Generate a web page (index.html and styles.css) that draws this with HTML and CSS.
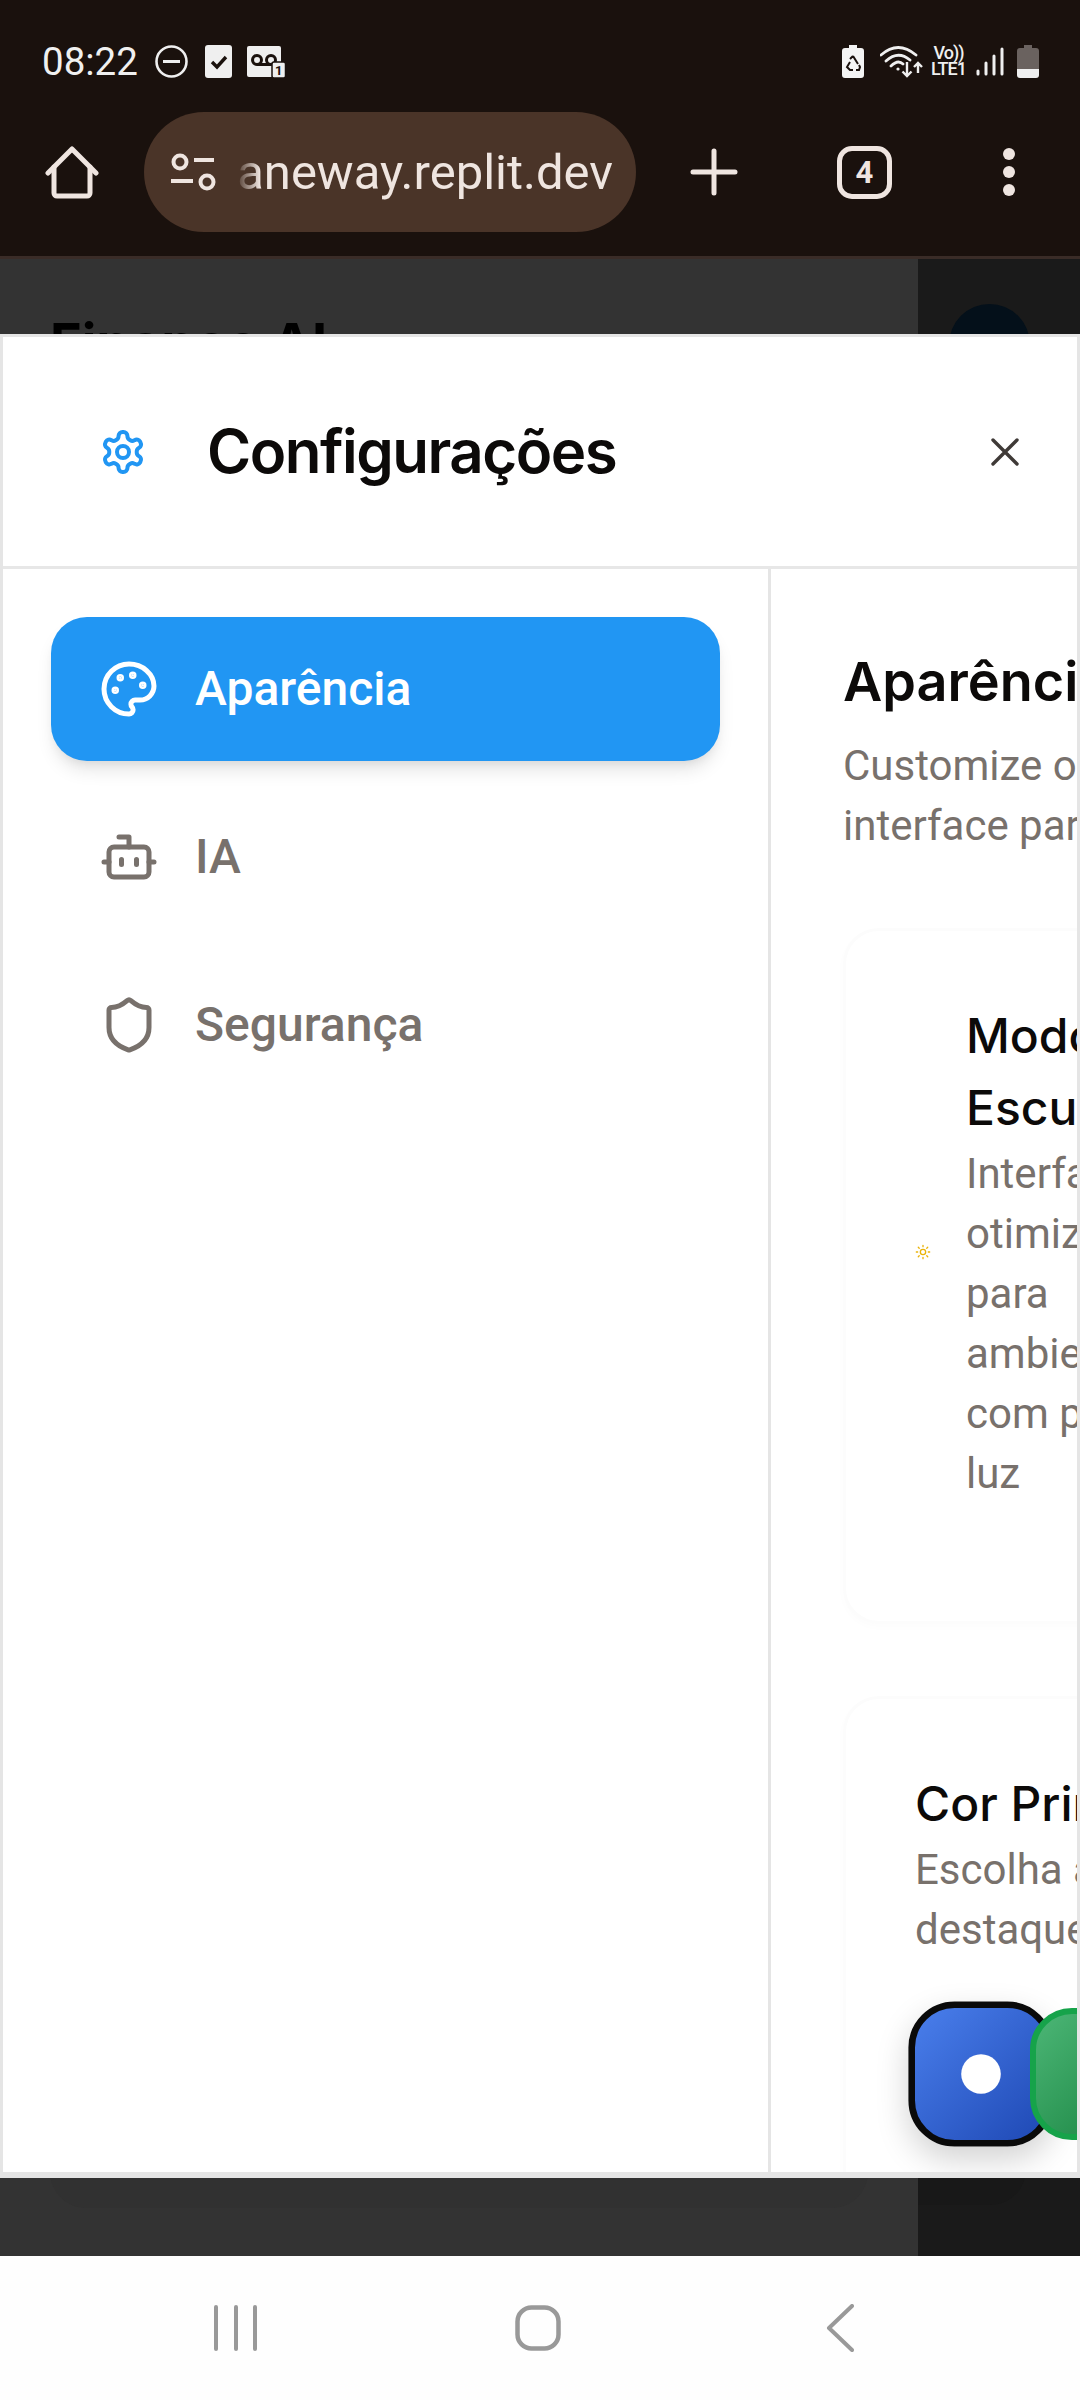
FILE: index.html
```html
<!DOCTYPE html>
<html lang="pt-BR">
<head>
    <meta charset="UTF-8">
    <meta name="viewport" content="width=device-width, initial-scale=1.0">
    <title>Configurações</title>
    <link rel="stylesheet" href="styles.css">
</head>
<body>
    <!-- Browser chrome -->
    <header class="chrome">
        <div class="status-bar">
            <span class="clock">08:22</span>
            <svg class="ic-dnd" width="33" height="33" viewBox="0 0 33 33"><circle cx="16.5" cy="16.5" r="15" fill="none" stroke="#efefef" stroke-width="2.6"/><path d="M8 16.5h17" stroke="#efefef" stroke-width="3"/></svg>
            <svg class="ic-check" width="27" height="33" viewBox="0 0 27 33"><rect width="27" height="33" rx="3" fill="#efefef"/><path d="M7 17l5 5 9-10" fill="none" stroke="#1a110d" stroke-width="3.4"/></svg>
            <svg class="ic-voicemail" width="40" height="33" viewBox="0 0 40 33"><path d="M3 1h30a2 2 0 0 1 2 2v29H3a2 2 0 0 1-2-2V3a2 2 0 0 1 2-2z" fill="#efefef"/><circle cx="11" cy="15" r="4.5" fill="none" stroke="#1a110d" stroke-width="3"/><circle cx="25" cy="15" r="4.5" fill="none" stroke="#1a110d" stroke-width="3"/><path d="M11 19.5h14" stroke="#1a110d" stroke-width="3"/><rect x="26" y="17" width="13.5" height="16" rx="2" fill="#efefef" stroke="#1a110d" stroke-width="1.5"/><text x="32.7" y="30" class="badge-num" text-anchor="middle">1</text></svg>
            <span class="status-right">
                <svg class="ic-recycle" width="22" height="33" viewBox="0 0 22 33"><path d="M7 0h8v3h4a3 3 0 0 1 3 3v24a3 3 0 0 1-3 3H3a3 3 0 0 1-3-3V6a3 3 0 0 1 3-3h4z" fill="#f4f4f4"/><path d="M11 11l5 8M8 17l-3 5 3 3h3M14 25h3l1-3-1-2M8 14l3-3" fill="none" stroke="#1a110d" stroke-width="2"/></svg>
                <svg class="ic-wifi" width="43" height="34" viewBox="0 0 43 34" fill="none" stroke="#efefef" stroke-width="2.8" stroke-linecap="round"><path d="M1 11Q18-4 36 11M6 17Q18 6 30 16M11 22Q18 15 23 20"/><circle cx="18" cy="25" r="1.6" fill="#efefef" stroke="none"/><path d="M27 18v14M22.500 27.500l4.500 4.500 4.500-4.500M38 19v10M34 23l4-4 4 4" stroke-width="2.4" stroke-linecap="butt"/></svg>
                <span class="volte"><span>Vo))</span><span>LTE1</span></span>
                <svg class="ic-signal" width="28" height="29" viewBox="0 0 28 29" stroke="#efefef" stroke-width="3" stroke-linecap="round"><path d="M2 27v-3M10 27v-11M18 27V9M26 27V2"/></svg>
                <svg class="ic-battery" width="22" height="33" viewBox="0 0 22 33"><path d="M7 0h8v3h4a3 3 0 0 1 3 3v18H0V6a3 3 0 0 1 3-3h4z" fill="#6a625f"/><path d="M0 24h22v6a3 3 0 0 1-3 3H3a3 3 0 0 1-3-3z" fill="#efefef"/></svg>
            </span>
        </div>
        <div class="toolbar">
            <svg class="ic-home" width="54" height="53" viewBox="0 0 54 53" fill="none" stroke="#efe5e0" stroke-width="5" stroke-linecap="round" stroke-linejoin="round"><path d="M3 27L27 3l24 24"/><path d="M9 21v26a3 3 0 0 0 3 3h30a3 3 0 0 0 3-3V21"/></svg>
            <div class="url-pill">
                <svg class="ic-site" width="46" height="40" viewBox="0 0 46 40" fill="none" stroke="#efe5e0" stroke-width="4"><circle cx="10" cy="10" r="6.500"/><path d="M24 8h20M1 29h22"/><circle cx="37" cy="30" r="6.500"/></svg>
                <div class="url-text"><span>aneway.replit.dev</span></div>
            </div>
            <svg class="ic-plus" width="48" height="48" viewBox="0 0 48 48" stroke="#efe5e0" stroke-width="5" stroke-linecap="round"><path d="M24 3v42M3 24h42"/></svg>
            <div class="tab-count">4</div>
            <div class="menu-dots"><i></i><i></i><i></i></div>
        </div>
    </header>

    <!-- Page behind the dialog -->
    <main class="page">
        <div class="page-left">
            <div class="page-brand">Finance AI</div>
            <div class="page-card"></div>
        </div>
        <div class="page-right">
            <div class="page-avatar"></div>
            <div class="page-right-card"></div>
        </div>

        <!-- Settings dialog -->
        <section class="dialog">
            <div class="dialog-header">
                <svg class="ic-gear" width="48" height="48" viewBox="0 0 24 24" fill="none" stroke="#2196f3" stroke-width="2" stroke-linecap="round" stroke-linejoin="round"><path d="M12.22 2h-.44a2 2 0 0 0-2 2v.18a2 2 0 0 1-1 1.730l-.43.25a2 2 0 0 1-2 0l-.15-.08a2 2 0 0 0-2.730.73l-.22.38a2 2 0 0 0 .73 2.730l.15.1a2 2 0 0 1 1 1.720v.51a2 2 0 0 1-1 1.740l-.15.09a2 2 0 0 0-.73 2.730l.22.38a2 2 0 0 0 2.730.73l.15-.08a2 2 0 0 1 2 0l.43.25a2 2 0 0 1 1 1.730V20a2 2 0 0 0 2 2h.44a2 2 0 0 0 2-2v-.18a2 2 0 0 1 1-1.730l.43-.25a2 2 0 0 1 2 0l.15.08a2 2 0 0 0 2.730-.73l.22-.39a2 2 0 0 0-.73-2.730l-.15-.08a2 2 0 0 1-1-1.740v-.5a2 2 0 0 1 1-1.740l.15-.09a2 2 0 0 0 .73-2.730l-.22-.38a2 2 0 0 0-2.730-.73l-.15.08a2 2 0 0 1-2 0l-.43-.25a2 2 0 0 1-1-1.730V4a2 2 0 0 0-2-2z"/><circle cx="12" cy="12" r="3"/></svg>
                <h1 class="dialog-title">Configurações</h1>
                <svg class="ic-close" width="48" height="48" viewBox="0 0 24 24" fill="none" stroke="#3f3a37" stroke-width="1.700" stroke-linecap="round"><path d="M18 6L6 18M6 6l12 12"/></svg>
            </div>
            <div class="dialog-body">
                <nav class="sidebar">
                    <a class="nav-item active">
                        <svg width="60" height="60" viewBox="0 0 24 24" fill="none" stroke="currentColor" stroke-width="2" stroke-linecap="round" stroke-linejoin="round"><circle cx="13.5" cy="6.500" r=".5" fill="currentColor"/><circle cx="17.500" cy="10.500" r=".5" fill="currentColor"/><circle cx="8.500" cy="7.500" r=".5" fill="currentColor"/><circle cx="6.500" cy="12.500" r=".5" fill="currentColor"/><path d="M12 2C6.500 2 2 6.500 2 12s4.500 10 10 10c.926 0 1.648-.746 1.648-1.688 0-.437-.18-.835-.437-1.125-.29-.289-.438-.652-.438-1.125a1.640 1.640 0 0 1 1.668-1.668h1.996c3.051 0 5.555-2.503 5.555-5.554C21.965 6.012 17.461 2 12 2z"/></svg>
                        <span>Aparência</span>
                    </a>
                    <a class="nav-item">
                        <svg width="60" height="60" viewBox="0 0 24 24" fill="none" stroke="currentColor" stroke-width="2" stroke-linecap="round" stroke-linejoin="round"><path d="M12 8V4H8"/><rect x="4" y="8" width="16" height="12" rx="2"/><path d="M2 14h2M20 14h2M15 13v2M9 13v2"/></svg>
                        <span>IA</span>
                    </a>
                    <a class="nav-item">
                        <svg width="60" height="60" viewBox="0 0 24 24" fill="none" stroke="currentColor" stroke-width="2" stroke-linecap="round" stroke-linejoin="round"><path d="M20 13c0 5-3.500 7.500-7.660 8.950a1 1 0 0 1-.67-.01C7.500 20.500 4 18 4 13V6a1 1 0 0 1 1-1c2 0 4.500-1.200 6.240-2.720a1.170 1.170 0 0 1 1.520 0C14.510 3.810 17 5 19 5a1 1 0 0 1 1 1z"/></svg>
                        <span>Segurança</span>
                    </a>
                </nav>
                <div class="content">
                    <div class="content-inner">
                        <h2 class="section-title">Aparência</h2>
                        <p class="muted section-desc">Customize o visual da interface para você</p>

                        <div class="card card-theme">
                            <div class="theme-row">
                                <svg class="ic-sun" width="16" height="16" viewBox="0 0 24 24" fill="none" stroke="#eab308" stroke-width="2" stroke-linecap="round"><circle cx="12" cy="12" r="4"/><path d="M12 2v2M12 20v2M4.930 4.930l1.410 1.410M17.660 17.660l1.410 1.410M2 12h2M20 12h2M6.340 17.660l-1.410 1.410M19.070 4.930l-1.410 1.410"/></svg>
                                <div class="theme-text">
                                    <h3 class="card-title">Modo Escuro</h3>
                                    <p class="muted">Interface otimizada para ambientes com pouca luz</p>
                                </div>
                            </div>
                        </div>

                        <div class="card">
                            <h3 class="card-title">Cor Principal</h3>
                            <p class="muted">Escolha a cor de destaque do app</p>
                            <div class="swatches">
                                <div class="swatch swatch-blue selected"><i></i></div>
                                <div class="swatch swatch-green"></div>
                            </div>
                        </div>
                    </div>
                </div>
            </div>
        </section>
    </main>

    <!-- Android nav bar -->
    <footer class="nav-bar">
        <svg width="44" height="46" viewBox="0 0 44 46" stroke="#999" stroke-width="4" stroke-linecap="round"><path d="M2 2v42M22 2v42M41 2v42"/></svg>
        <svg width="46" height="46" viewBox="0 0 46 46" fill="none" stroke="#999" stroke-width="4.500"><rect x="2.500" y="2.500" width="41" height="41" rx="14"/></svg>
        <svg width="28" height="48" viewBox="0 0 28 48" fill="none" stroke="#999" stroke-width="4" stroke-linecap="round" stroke-linejoin="round"><path d="M26 2L3 24l23 22"/></svg>
    </footer>
</body>
</html>
```

FILE: styles.css
```css
/* General styles */
* {
    box-sizing: border-box;
}

html, body {
    margin: 0;
    padding: 0;
}

body {
    width: 1080px;
    height: 2400px;
    display: flex;
    flex-direction: column;
    overflow: hidden;
    font-family: 'Roboto', sans-serif;
    background: #fefefe;
}

svg {
    display: block;
    flex-shrink: 0;
}

/* Browser chrome */
.chrome {
    height: 259px;
    background: #1a110d;
    border-bottom: 3px solid #3a2c27;
}

.status-bar {
    height: 112px;
    padding: 10px 41px 0 42px;
    display: flex;
    align-items: center;
}

.clock {
    width: 96px;
    font-size: 38.500px;
    color: #f0f0f0;
}

.ic-dnd { margin-left: 17px; }
.ic-check { margin-left: 17px; }
.ic-voicemail { margin-left: 14px; }

.badge-num {
    font: 700 13px 'Roboto', sans-serif;
    fill: #1a110d;
}

.status-right {
    margin-left: auto;
    display: flex;
    align-items: center;
}

.ic-wifi { margin-left: 16px; }

.volte {
    width: 37px;
    margin-left: 7px;
    display: flex;
    flex-direction: column;
    align-items: center;
    font-size: 18px;
    font-weight: 500;
    line-height: 16px;
    letter-spacing: -1px;
    color: #efefef;
}

.ic-signal { margin-left: 9px; }
.ic-battery { margin-left: 13px; }

.toolbar {
    height: 120px;
    padding-left: 45px;
    display: flex;
    align-items: center;
}

.url-pill {
    width: 492px;
    height: 120px;
    margin-left: 45px;
    padding: 0 23px 0 26px;
    display: flex;
    align-items: center;
    background: #4a3428;
    border-radius: 60px;
    color: #efe5e0;
}

.url-text {
    position: relative;
    flex: 1;
    display: flex;
    justify-content: flex-end;
    overflow: hidden;
    font-size: 49px;
    white-space: nowrap;
}

/* fade on the left where the host is cut off */
.url-text::before {
    content: "";
    position: absolute;
    left: 20px;
    top: 0;
    bottom: 0;
    width: 24px;
    background: linear-gradient(to right, #4a3428, rgba(74, 52, 40, 0));
}

.ic-plus { margin-left: 54px; }

.tab-count {
    width: 55px;
    height: 53px;
    margin-left: 99px;
    display: flex;
    align-items: center;
    justify-content: center;
    border: 5px solid #efe5e0;
    border-radius: 15px;
    color: #efe5e0;
    font-size: 31px;
    font-weight: 700;
}

.menu-dots {
    margin-left: 111px;
    display: flex;
    flex-direction: column;
    gap: 6px;
}

.menu-dots i {
    display: block;
    width: 12px;
    height: 12px;
    border-radius: 50%;
    background: #efe5e0;
}

/* Page behind the dialog */
.page {
    position: relative;
    flex: 1;
    display: flex;
}

.page-left {
    width: 918px;
    flex-shrink: 0;
    padding: 48px 50px 48px;
    display: flex;
    flex-direction: column;
    background: #333;
}

.page-brand {
    font-family: 'Inter', sans-serif;
    font-size: 54px;
    font-weight: 700;
    line-height: 72px;
    color: #000;
}

.page-card {
    flex: 1;
    border-radius: 36px;
    background: #313131;
}

.page-right {
    width: 162px;
    padding: 45px 0 51px;
    display: flex;
    flex-direction: column;
    background: #1a1a1a;
}

.page-avatar {
    width: 81px;
    height: 81px;
    margin-left: 31px;
    border-radius: 50%;
    background: #04101a;
}

.page-right-card {
    flex: 1;
    margin-right: 54px;
    border-radius: 0 0 36px 0;
    background: #181818;
}

/* Settings dialog */
.dialog {
    position: absolute;
    left: 0;
    top: 75px;
    width: 1080px;
    height: 1844px;
    display: flex;
    flex-direction: column;
    overflow: hidden;
    background: #fff;
    border: 3px solid #e5e5e5;
    border-bottom-width: 6px;
}

.dialog-header {
    height: 232px;
    padding: 0 48px 0 96px;
    display: flex;
    align-items: center;
    border-bottom: 3px solid #e7e7e7;
}

.dialog-title {
    margin: 0 0 2px 60px;
    flex: 1;
    font-family: 'Inter', sans-serif;
    font-size: 60px;
    font-weight: 600;
    letter-spacing: -1.500px;
    color: #0c0a09;
}

.dialog-body {
    flex: 1;
    min-height: 0;
    display: flex;
}

/* Sidebar */
.sidebar {
    width: 768px;
    flex-shrink: 0;
    padding: 48px;
    display: flex;
    flex-direction: column;
    gap: 24px;
    border-right: 3px solid #e5e5e5;
}

.nav-item {
    height: 144px;
    padding: 0 48px;
    display: flex;
    align-items: center;
    gap: 36px;
    border-radius: 36px;
    font-size: 48px;
    font-weight: 500;
    color: #78716c;
}

.nav-item span {
    margin-bottom: 2px;
}

.nav-item.active {
    background: #2196f3;
    color: #fff;
    box-shadow: 0 12px 18px -3px rgba(0, 0, 0, 0.1), 0 6px 12px -6px rgba(0, 0, 0, 0.1);
}

/* Content column, wider than the screen so it gets cut at the right */
.content {
    flex: 1;
    min-width: 0;
    overflow: hidden;
    padding: 77px 0 0 72px;
}

.content-inner {
    width: 462px;
}

.section-title {
    margin: 0 0 18px;
    font-family: 'Inter', sans-serif;
    font-size: 54px;
    font-weight: 600;
    line-height: 72px;
    color: #0c0a09;
}

.muted {
    margin: 0;
    font-size: 42px;
    line-height: 60px;
    color: #78716c;
}

.section-desc {
    margin-bottom: 72px;
}

.card {
    margin-bottom: 72px;
    padding: 69px;
    border: 3px solid #fcfcfc;
    border-radius: 36px;
    box-shadow: 0 3px 9px rgba(0, 0, 0, 0.015);
    background: #fff;
}

.card-theme {
    padding-bottom: 117px;
}

.card-title {
    margin: 0;
    font-family: 'Inter', sans-serif;
    font-size: 48px;
    font-weight: 500;
    line-height: 72px;
    color: #0c0a09;
}

.theme-row {
    display: flex;
    align-items: center;
    gap: 35px;
}

.theme-text {
    width: 240px;
}

/* Colour swatches */
.swatches {
    margin-top: 48px;
    display: grid;
    grid-template-columns: repeat(5, 115px);
}

.swatch {
    width: 132px;
    height: 132px;
    display: flex;
    align-items: center;
    justify-content: center;
    border-radius: 42px;
    border: 6px solid transparent;
    transform: scale(1);
}

.swatch.selected {
    transform: scale(1.1);
    box-shadow: 0 12px 30px rgba(0, 0, 0, 0.18);
}

.swatch i {
    width: 36px;
    height: 36px;
    border-radius: 50%;
    background: #fff;
}

.swatch-blue {
    background: linear-gradient(135deg, #4a7fec, #1e48b4);
    border-color: #0a0a0a;
}

.swatch-green {
    background: linear-gradient(135deg, #4cb676, #15803d);
    border-color: #16a34a;
}

/* Android nav bar */
.nav-bar {
    height: 144px;
    display: grid;
    grid-template-columns: 214px 44px 257px 46px 265px 28px;
    align-items: center;
    background: #fefefe;
}

.nav-bar svg:nth-child(1) { grid-column: 2; }
.nav-bar svg:nth-child(2) { grid-column: 4; }
.nav-bar svg:nth-child(3) { grid-column: 6; }
```
